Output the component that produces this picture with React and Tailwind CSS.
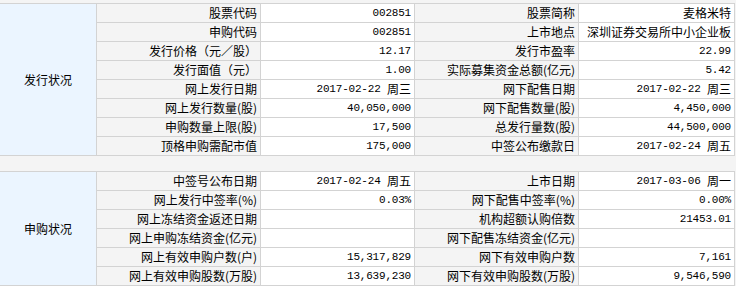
import React from "react";

const issueRows = [
  ["股票代码", "002851", "股票简称", "麦格米特"],
  ["申购代码", "002851", "上市地点", "深圳证券交易所中小企业板"],
  ["发行价格（元／股）", "12.17", "发行市盈率", "22.99"],
  ["发行面值（元）", "1.00", "实际募集资金总额(亿元)", "5.42"],
  ["网上发行日期", "2017-02-22 周三", "网下配售日期", "2017-02-22 周三"],
  ["网上发行数量(股)", "40,050,000", "网下配售数量(股)", "4,450,000"],
  ["申购数量上限(股)", "17,500", "总发行量数(股)", "44,500,000"],
  ["顶格申购需配市值", "175,000", "中签公布缴款日", "2017-02-24 周五"],
];

const subRows = [
  ["中签号公布日期", "2017-02-24 周五", "上市日期", "2017-03-06 周一"],
  ["网上发行中签率(%)", "0.03%", "网下配售中签率(%)", "0.00%"],
  ["网上冻结资金返还日期", "", "机构超额认购倍数", "21453.01"],
  ["网上申购冻结资金(亿元)", "", "网下配售冻结资金(亿元)", ""],
  ["网上有效申购户数(户)", "15,317,829", "网下有效申购户数", "7,161"],
  ["网上有效申购股数(万股)", "13,639,230", "网下有效申购股数(万股)", "9,546,590"],
];

const label =
  "bg-[#f4f4f4] flex items-center justify-end pr-[3px] whitespace-nowrap";
const value =
  "bg-white flex items-center justify-end pr-[3px] whitespace-pre text-[11px] tracking-[-0.2px] font-['Liberation_Mono',monospace]";

// digits in mono, chinese text at full size
function Value({ text }) {
  return text.split(/([\u4e00-\u9fff]+)/).map((part, i) =>
    /[\u4e00-\u9fff]/.test(part) ? (
      <span
        key={i}
        className="text-[12px] tracking-normal font-['Noto_Sans_CJK_SC',sans-serif]"
      >
        {part}
      </span>
    ) : (
      <span key={i}>{part}</span>
    )
  );
}

function Section({ title, rows, span }) {
  return (
    <div className="grid grid-cols-[96px_163px_153px_163px_155px] auto-rows-[18px] gap-px bg-[#d3d3d3] border-y border-r border-[#d3d3d3] w-[735px]">
      <div className={`${span} bg-[#ebf5ff] flex items-center justify-center`}>
        {title}
      </div>
      {rows.map((r, i) => (
        <React.Fragment key={i}>
          <div className={label}>{r[0]}</div>
          <div className={value}>
            <Value text={r[1]} />
          </div>
          <div className={label}>{r[2]}</div>
          <div className={value}>
            <Value text={r[3]} />
          </div>
        </React.Fragment>
      ))}
    </div>
  );
}

export default function App() {
  return (
    <div className="w-[736px] h-[286px] bg-[#f4f4f4] pt-[3px] text-[12px] leading-none text-black font-['Noto_Sans_CJK_SC',sans-serif]">
      <Section title="发行状况" rows={issueRows} span="row-span-8" />
      <div className="h-[15px]" />
      <Section title="申购状况" rows={subRows} span="row-span-6" />
    </div>
  );
}
